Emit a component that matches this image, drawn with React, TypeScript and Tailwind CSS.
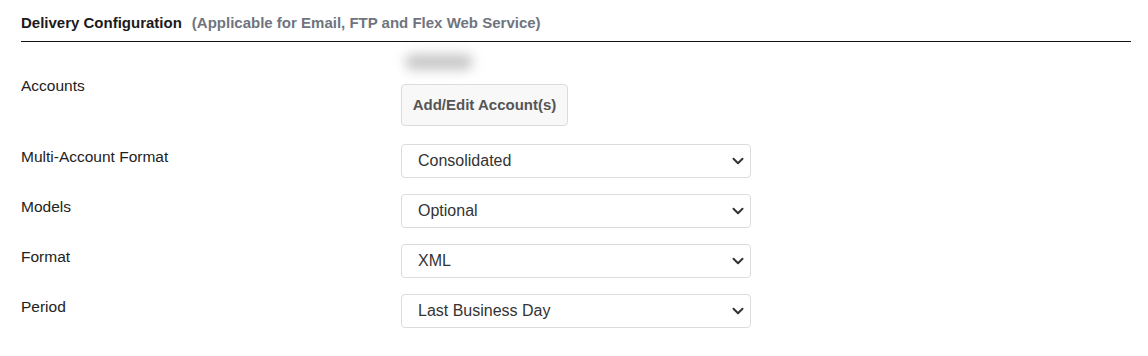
import React from 'react';

const rows = [
  { label: 'Multi-Account Format', value: 'Consolidated' },
  { label: 'Models', value: 'Optional' },
  { label: 'Format', value: 'XML' },
  { label: 'Period', value: 'Last Business Day' },
];

const Chevron = () => (
  <svg width="12" height="8" viewBox="0 0 12 8" className="text-[#333]">
    <path d="M1.5 1.8 6 6.2l4.5-4.4" fill="none" stroke="currentColor" strokeWidth="2" strokeLinecap="round" strokeLinejoin="round" />
  </svg>
);

const SelectBox: React.FC<{ value: string }> = ({ value }) => (
  <div className="flex h-[34px] w-[350px] items-center justify-between rounded-[4px] border border-[#dcdcdc] bg-white pl-[16px] pr-[6px] text-[16px] text-[#333]">
    <span>{value}</span>
    <Chevron />
  </div>
);

export default function App() {
  return (
    <div className="min-h-[356px] w-[1148px] bg-white pl-[21px] pr-[17px] pt-[12px] font-['Liberation_Sans',Arial,sans-serif]">
      <div className="flex items-baseline gap-[10px] border-b border-[#111] pb-[7px] leading-[22px]">
        <h2 className="text-[15px] font-bold text-[#1a1a1a]">Delivery Configuration</h2>
        <span className="text-[15px] font-bold text-[#6f7580]">(Applicable for Email, FTP and Flex Web Service)</span>
      </div>

      <div className="mt-[8px] flex">
        <div className="w-[380px] pt-[24px] text-[15.5px] leading-[24px] text-[#222]">Accounts</div>
        <div className="flex flex-col">
          <div className="ml-[4px] mt-[4px] h-[16px] w-[68px] rounded-full bg-[#c8c8c8] blur-[6px]" />
          <button
            type="button"
            className="mt-[14px] h-[42px] w-[167px] rounded-[4px] border border-[#dcdcdc] bg-[#f8f8f8] text-[15px] font-bold text-[#555]"
          >
            Add/Edit Account(s)
          </button>
        </div>
      </div>

      <div className="mt-[18px] flex flex-col gap-[16px]">
        {rows.map((r) => (
          <div key={r.label} className="flex">
            <div className="w-[380px] pt-[1px] text-[15.5px] leading-[24px] text-[#222]">{r.label}</div>
            <SelectBox value={r.value} />
          </div>
        ))}
      </div>
    </div>
  );
}
